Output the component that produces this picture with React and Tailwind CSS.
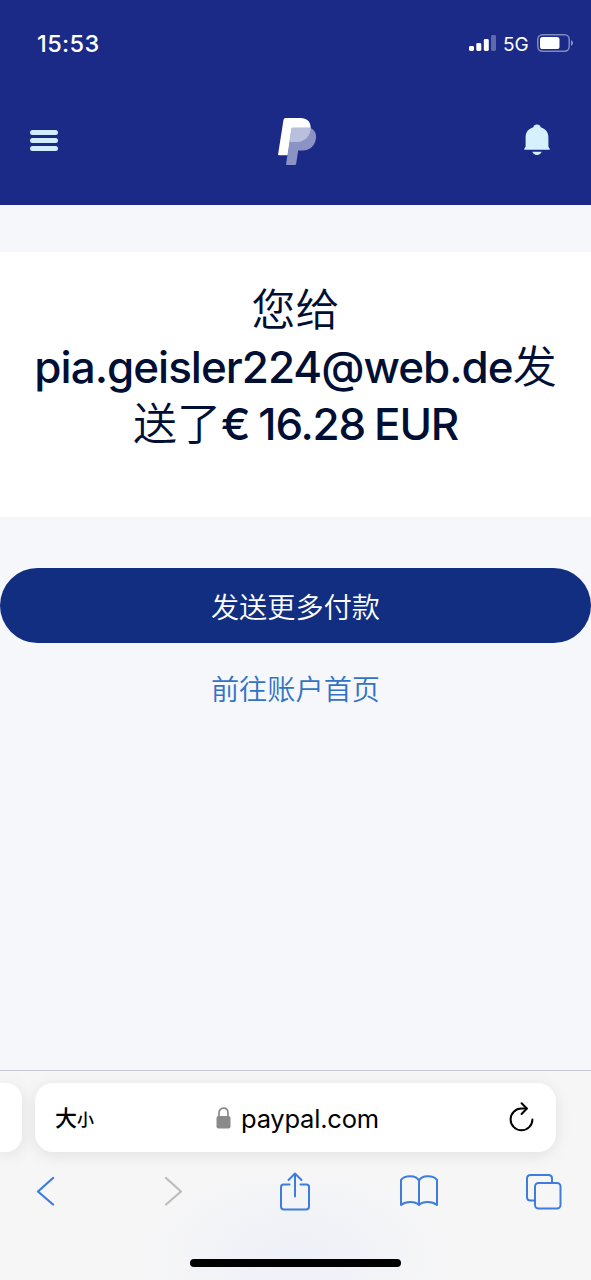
import React from "react";

const StatusBar = () => {
  return (
    <div className="flex h-[86px] items-center justify-between pl-[37px] pr-[18px] text-white">
      <span className="mt-[2px] text-[23.5px] font-medium leading-none tracking-[0.4px]">15:53</span>
      <div className="flex items-center">
        <svg width="28" height="18" viewBox="0 0 28 18" fill="currentColor">
          <rect x="0" y="12" width="5" height="5" rx="1.4" />
          <rect x="7.3" y="9" width="5" height="8" rx="1.4" />
          <rect x="14.8" y="5" width="5" height="12" rx="1.4" />
          <rect x="22" y="1" width="5" height="16" rx="1.4" opacity="0.3" />
        </svg>
        <span className="ml-[6px] mt-[2px] w-[26px] text-[19px] leading-none">5G</span>
        <svg className="ml-[8px]" width="36" height="18" viewBox="0 0 36 18" fill="none">
          <rect x="0.8" y="0.8" width="31.4" height="16.4" rx="4.6" stroke="#fff" strokeOpacity="0.45" strokeWidth="1.5" />
          <rect x="3" y="3" width="19.5" height="12" rx="2.6" fill="#fff" />
          <path d="M34 6.2c1.3.6 2 1.6 2 2.8s-.7 2.200-2 2.800z" fill="#fff" fillOpacity="0.5" />
        </svg>
      </div>
    </div>
  );
};

const PayPalLogo = () => {
  return (
    <svg width="40" height="48" viewBox="0 0 40 48">
      <path d="M7.500 0H22.500C29 0 33 4 32.700 10.500C32.300 18.500 26.500 24 18.500 24H12L9.800 37.300H1Q-.1 37.300.1 36.200L5.500 1.700Q5.800 0 7.500 0Z" fill="#fff" />
      <path d="M14.800 9.800H32.300C36.800 12 38.700 16 37.900 20.800C36.700 28.300 31.500 32.600 24.500 32.600H20.200L18.200 45.500Q18 47 16.500 47H9Q7.900 47 8.100 45.900L13.400 11Q13.600 9.800 14.800 9.800Z" fill="#8b93c4" />
      <path d="M14.800 9.800H32.600C32.800 18 26.800 24 18.500 24H11.500L13.400 11Q13.600 9.800 14.800 9.800Z" fill="#b9c0de" />
    </svg>
  );
};

const BellIcon = () => {
  return (
    <svg width="26" height="32" viewBox="0 0 26 32" fill="#d7f0ff">
      <path d="M13 0.600c2 0 3.300 1.100 3.700 2.700C21.400 4.700 24.400 8.300 24.400 13v9.700l1.200 1.700c.4.700.2 1.400-.6 1.400H1c-.8 0-1-.7-.6-1.400L1.600 22.700V13c0-4.700 3-8.300 7.700-9.700C9.700 1.700 11 .600 13 .600Z" />
      <path d="M8.300 27.800h9.400c-.7 2-2.400 3.200-4.700 3.200s-4-1.200-4.700-3.200Z" />
    </svg>
  );
};

const Header = () => {
  return (
    <header className="h-[205px] bg-[#1a2a86]">
      <StatusBar />
      <div className="grid h-[108px] grid-cols-3 items-center pl-[30px] pr-[41px]">
        <button className="flex w-7 flex-col gap-[3px]">
          <span className="h-[5px] rounded-full bg-[#d2ecff]" />
          <span className="h-[5px] rounded-full bg-[#d2ecff]" />
          <span className="h-[5px] rounded-full bg-[#d2ecff]" />
        </button>
        <div className="ml-[75px] mt-[4px]">
          <PayPalLogo />
        </div>
        <button className="justify-self-end">
          <BellIcon />
        </button>
      </div>
    </header>
  );
};

const AddressBar = () => {
  return (
    <div className="flex gap-[13px]">
      <div className="h-[69px] w-[22px] rounded-r-[16px] bg-white shadow-[0_3px_16px_rgba(0,0,0,0.09)]" />
      <div className="flex h-[69px] w-[521px] items-center rounded-[18px] bg-white pl-[20px] pr-[22px] text-black shadow-[0_3px_16px_rgba(0,0,0,0.09)]">
        <div className="mt-[-3px] flex w-[161px] items-baseline font-['Noto_Sans_CJK_SC',sans-serif] font-medium leading-none">
          <span className="text-[22px]">大</span>
          <span className="text-[17px]">小</span>
        </div>
        <svg width="15" height="22" viewBox="0 0 15 22" fill="none">
          <path d="M3 10V6.200C3 3.200 4.800 1.200 7.500 1.200S12 3.200 12 6.200V10" stroke="#8a8a8a" strokeWidth="1.7" />
          <rect x="0.500" y="9" width="14" height="12.500" rx="2" fill="#8a8a8a" />
        </svg>
        <span className="ml-[10px] mt-[2px] text-[25.500px] leading-none tracking-[-0.22px]">paypal.com</span>
        <svg className="ml-auto mt-[-2px]" width="25" height="30" viewBox="0 0 25 30" fill="none" stroke="#000" strokeWidth="2" strokeLinecap="round" strokeLinejoin="round">
          <path d="M17.500 6.500H12.500A10.900 10.900 0 1 0 23.400 17.400" />
          <path d="M12.600 1.300 17.900 6.500 12.600 12" />
        </svg>
      </div>
    </div>
  );
};

const BrowserBar = () => {
  return (
    <footer className="h-[210px] border-t border-[#c8c9d2] bg-[#f6f6f7] bg-[radial-gradient(ellipse_150px_85px_at_50%_88%,#eef0f7,#f6f6f7)] pt-[12px]">
      <AddressBar />
      <nav className="mt-[19px] flex h-[40px] items-center pl-[36px]">
        <svg width="19" height="30" viewBox="0 0 19 30" fill="none" stroke="#3c7ddd" strokeWidth="2.300" strokeLinecap="round" strokeLinejoin="round">
          <path d="M17 2 2 15.500 17 28.500" />
        </svg>
        <svg className="ml-[109px]" width="19" height="30" viewBox="0 0 19 30" fill="none" stroke="#bdbdbf" strokeWidth="2.200" strokeLinecap="round" strokeLinejoin="round">
          <path d="M2 2 17 15.500 2 28.500" />
        </svg>
        <svg className="ml-[96px]" width="32" height="39" viewBox="0 0 32 39" fill="none" stroke="#3c7ddd" strokeWidth="2" strokeLinecap="round" strokeLinejoin="round">
          <path d="M10.500 12.500H4.500Q2 12.500 2 15V34.500Q2 37.500 5 37.500H27Q30 37.500 30 34.500V15Q30 12.500 27.500 12.500H21.500" />
          <path d="M16 24.500V1.500M9.500 8 16 1.500 22.500 8" />
        </svg>
        <svg className="ml-[88px]" width="40" height="34" viewBox="0 0 40 34" fill="none" stroke="#3c7ddd" strokeWidth="2" strokeLinejoin="round">
          <path d="M20 6.500C17 1 6 1 2 5.800V31C7 27 16 27 20 31C24 27 33 27 38 31V5.800C34 1 23 1 20 6.500ZM20 6.500V31" />
        </svg>
        <svg className="ml-[86px]" width="37" height="37" viewBox="0 0 37 37" fill="none" stroke="#3c7ddd" strokeWidth="2">
          <path d="M10 27.500H5.500Q2 27.500 2 24V5.500Q2 2 5.500 2H23.500Q27 2 27 5.500V10" />
          <rect x="10" y="10" width="25.500" height="25.500" rx="3.500" />
        </svg>
      </nav>
      <div className="mx-auto mt-[48px] h-[8px] w-[211px] rounded-full bg-black" />
    </footer>
  );
};

export default function App() {
  return (
    <div className="flex h-[1280px] w-[591px] flex-col overflow-hidden bg-[#f5f7fb] font-['Inter','Noto_Sans_CJK_SC',sans-serif]">
      <Header />
      <main className="flex-1 pt-[47px]">
        <section className="h-[265px] bg-white pt-[30px] text-center text-[44px] leading-[57px] text-[#000f33]">
          <h1 className="whitespace-nowrap font-medium">
            <span className="block font-[350]">您给</span>
            <span className="block">
              <span className="tracking-[-1px]">pia.geisler224@web.de</span>
              <span className="font-[350]">发</span>
            </span>
            <span className="block">
              <span className="font-[350]">送了</span>
              <span className="tracking-[-1.2px] [word-spacing:-1.5px]">€ 16.28 EUR</span>
            </span>
          </h1>
        </section>
        <button className="mt-[51px] flex h-[75px] w-full items-center justify-center rounded-full bg-[#112e81] pt-[5px] text-[28.200px] font-[350] text-white">
          发送更多付款
        </button>
        <a className="mt-[27px] block text-center text-[28.200px] font-[350] leading-[40px] text-[#3373c4]">前往账户首页</a>
      </main>
      <BrowserBar />
    </div>
  );
}
